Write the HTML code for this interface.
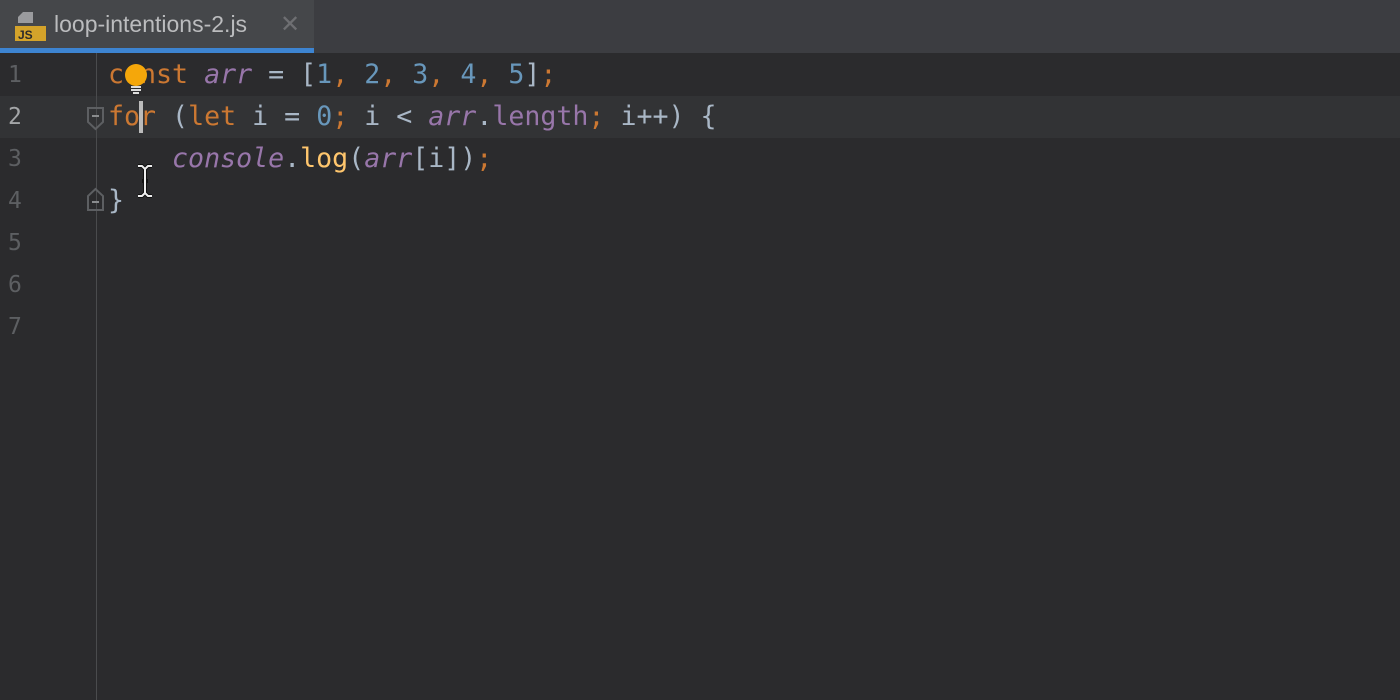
<!DOCTYPE html>
<html><head><meta charset="utf-8"><style>
*{margin:0;padding:0;box-sizing:border-box}
body{width:1400px;height:700px;overflow:hidden;background:#2b2b2d;font-family:"DejaVu Sans Mono",monospace;position:relative}
.tabs{position:absolute;left:0;top:0;width:1400px;height:53px;background:#3c3d41}
.tab{position:absolute;left:0;top:0;width:314px;height:53px;background:#45474a;border-bottom:5px solid #3d84d1}
.tab .name{position:absolute;left:54px;top:11px;font-family:"Liberation Sans",sans-serif;font-size:23px;color:#bbbcbe}
.tab .x{position:absolute;left:280px;top:10px;font-family:"Liberation Sans",sans-serif;font-size:24px;color:#6e6f72}
.gutterline{position:absolute;left:96px;top:53px;width:1px;height:647px;background:#4a4b4d}
.cur{position:absolute;left:0;top:96px;width:1400px;height:42px;background:#323335}
.ln{position:absolute;left:8px;font-size:23px;color:#5d5f62;line-height:42px}
.code{position:absolute;left:108px;font-size:26.6px;white-space:pre;color:#a9b7c6;line-height:42px}
.k{color:#cc7832}.v{color:#9876aa;font-style:italic}.n{color:#6897bb}.p{color:#9876aa}.f{color:#ffc66d}
</style></head><body>
<div class="tabs"><div class="tab">
<svg style="position:absolute;left:15px;top:12px" width="32" height="30"><path d="M8 0h10v11H3V5z" fill="#9a9b9e"/><rect x="0" y="14" width="31" height="15" fill="#d4a32a"/><text x="3" y="27" font-family="Liberation Sans" font-size="12" font-weight="bold" fill="#2b2b2b">JS</text></svg>
<span class="name">loop-intentions-2.js</span><span class="x">✕</span></div></div>
<div class="cur"></div>
<div class="gutterline"></div>
<div class="ln" style="top:54px">1</div>
<div class="ln" style="top:96px;color:#a4a6a8">2</div>
<div class="ln" style="top:138px">3</div>
<div class="ln" style="top:180px">4</div>
<div class="ln" style="top:222px">5</div>
<div class="ln" style="top:264px">6</div>
<div class="ln" style="top:306px">7</div>
<div class="code" style="top:54px"><span class="k">const</span> <span class="v">arr</span> = [<span class="n">1</span><span class="k">,</span> <span class="n">2</span><span class="k">,</span> <span class="n">3</span><span class="k">,</span> <span class="n">4</span><span class="k">,</span> <span class="n">5</span>]<span class="k">;</span></div>
<div class="code" style="top:96px"><span class="k">for</span> (<span class="k">let</span> i = <span class="n">0</span><span class="k">;</span> i &lt; <span class="v">arr</span>.<span class="p">length</span><span class="k">;</span> i++) {</div>
<div class="code" style="top:138px">    <span class="v">console</span>.<span class="f">log</span>(<span class="v">arr</span>[i])<span class="k">;</span></div>
<div class="code" style="top:180px">}</div>
<svg style="position:absolute;left:123px;top:63px" width="26" height="32"><circle cx="13" cy="12" r="11" fill="#f5a70a"/><rect x="8" y="23" width="10" height="2" fill="#ddd"/><rect x="8" y="26" width="10" height="2" fill="#ddd"/><rect x="10" y="29" width="6" height="2" fill="#ddd"/></svg>
<div style="position:absolute;left:139px;top:101px;width:4px;height:32px;background:#bbbbbb"></div>
<svg style="position:absolute;left:86px;top:106px" width="20" height="26"><path d="M2 2h15v14l-7.5 7-7.5-7z" fill="none" stroke="#5d5f62" stroke-width="2"/><path d="M6 10h7" stroke="#8a8c8e" stroke-width="2"/></svg>
<svg style="position:absolute;left:86px;top:186px" width="20" height="26"><path d="M2 24h15V10L9.5 3 2 10z" fill="none" stroke="#5d5f62" stroke-width="2"/><path d="M6 16h7" stroke="#8a8c8e" stroke-width="2"/></svg>
<svg style="position:absolute;left:135px;top:163px" width="20" height="36"><path d="M3 3h4l3 3 3-3h4M10 6v24M3 33h4l3-3 3 3h4M7 18h6" fill="none" stroke="#111" stroke-width="4"/><path d="M3 3h4l3 3 3-3h4M10 6v24M3 33h4l3-3 3 3h4" fill="none" stroke="#eee" stroke-width="2"/></svg>
</body></html>
